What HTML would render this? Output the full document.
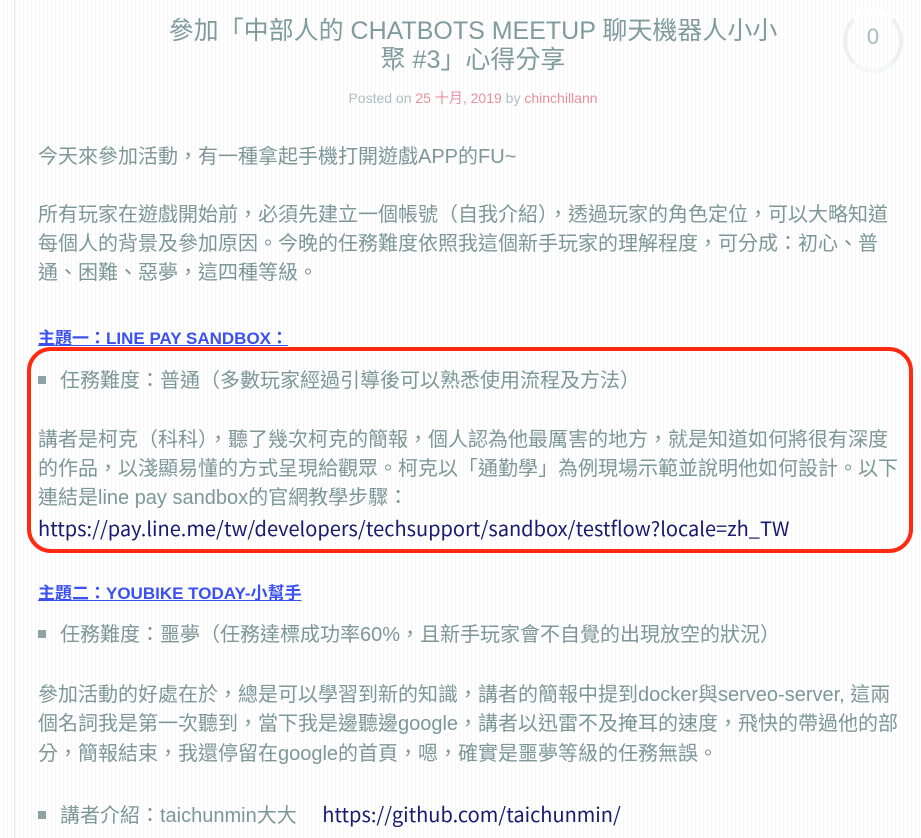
<!DOCTYPE html>
<html><head><meta charset="utf-8"><style>
html,body{margin:0;padding:0}
body{width:921px;height:838px;overflow:hidden;position:relative;background:#fff;
background-image:repeating-linear-gradient(90deg,#fff 0,#fff 3px,#f6f7f7 3px,#f6f7f7 4px);
font-family:"Liberation Sans","Noto Sans CJK TC",sans-serif;color:#7d9799}
.vl{position:absolute;left:14px;top:0;width:1px;height:838px;background:#e6e9e9}
.l{position:absolute;left:38px;white-space:nowrap;font-size:20px;line-height:29px}
.t{position:absolute;left:130px;width:686px;text-align:center;font-size:25px;line-height:29px;color:#7f9b9d}
.h{position:absolute;left:38px;font-size:17px;font-weight:bold;color:#3a50f0;text-decoration:underline;white-space:nowrap}
.b{display:inline-block;width:8px;height:8px;background:#8da3a5;margin-right:14px;vertical-align:middle;position:relative;top:-2px}
a{color:#1a1a70;text-decoration:none;font-family:"Noto Sans CJK TC",sans-serif}
</style></head><body>
<div class="vl"></div>
<div class="t" style="top:17px">參加「中部人的 CHATBOTS MEETUP 聊天機器人小小<br>聚 #3」心得分享</div>
<div style="position:absolute;left:843px;top:9px;width:52px;height:56px;border-radius:50%;border:4px solid #eef0f0;border-top-color:#fff;border-bottom-color:#f5f6f6"></div>
<div style="position:absolute;left:843px;top:24px;width:60px;text-align:center;font-size:22px;color:#a9bcbd">0</div>
<div style="position:absolute;left:0;width:946px;text-align:center;top:88px;font-size:14px;color:#aebfc0">Posted on <span style="color:#e88f9e">25 十月, 2019</span> by <span style="color:#e88f9e">chinchillann</span></div>
<div class="l" style="top:143px">今天來參加活動，有一種拿起手機打開遊戲APP的FU~</div>
<div class="l" style="top:201px">所有玩家在遊戲開始前，必須先建立一個帳號（自我介紹），透過玩家的角色定位，可以大略知道</div>
<div class="l" style="top:230px">每個人的背景及參加原因。今晚的任務難度依照我這個新手玩家的理解程度，可分成：初心、普</div>
<div class="l" style="top:259px">通、困難、惡夢，這四種等級。</div>
<div class="h" style="top:324px">主題一：LINE PAY SANDBOX：</div>
<div style="position:absolute;left:27px;top:347px;width:878px;height:198px;border:4px solid #ff2a10;border-radius:24px"></div>
<div class="l" style="top:367px"><span class="b"></span>任務難度：普通（多數玩家經過引導後可以熟悉使用流程及方法）</div>
<div class="l" style="top:426px">講者是柯克（科科），聽了幾次柯克的簡報，個人認為他最厲害的地方，就是知道如何將很有深度</div>
<div class="l" style="top:455px">的作品，以淺顯易懂的方式呈現給觀眾。柯克以「通勤學」為例現場示範並說明他如何設計。以下</div>
<div class="l" style="top:484px">連結是line pay sandbox的官網教學步驟：</div>
<div class="l" style="top:513px"><a>https://pay.line.me/tw/developers/techsupport/sandbox/testflow?locale=zh_TW</a></div>
<div class="h" style="top:579px">主題二：YOUBIKE TODAY-小幫手</div>
<div class="l" style="top:621px"><span class="b"></span>任務難度：噩夢（任務達標成功率60%，且新手玩家會不自覺的出現放空的狀況）</div>
<div class="l" style="top:681px">參加活動的好處在於，總是可以學習到新的知識，講者的簡報中提到docker與serveo-server, 這兩</div>
<div class="l" style="top:710px">個名詞我是第一次聽到，當下我是邊聽邊google，講者以迅雷不及掩耳的速度，飛快的帶過他的部</div>
<div class="l" style="top:740px">分，簡報結束，我還停留在google的首頁，嗯，確實是噩夢等級的任務無誤。</div>
<div class="l" style="top:799px"><span class="b"></span>講者介紹：taichunmin大大　&nbsp;<a>https://github.com/taichunmin/</a></div>
</body></html>
